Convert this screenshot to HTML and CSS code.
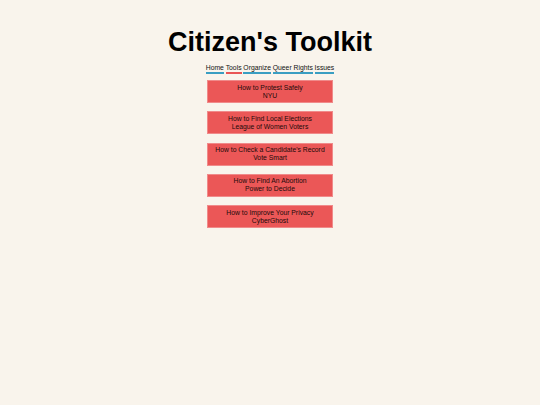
FILE: index.html
```html
<!DOCTYPE html>
<html>
<head>
<meta charset="utf-8">
<link rel="stylesheet" href="styles.css">
</head>
<body>
<div class="page">
  <h1 class="title">Citizen's Toolkit</h1>
  <nav class="nav">
    <a class="nav-link">Home</a>
    <a class="nav-link active">Tools</a>
    <a class="nav-link">Organize</a>
    <a class="nav-link">Queer Rights</a>
    <a class="nav-link">Issues</a>
  </nav>
  <div class="cards">
    <div class="card"><span>How to Protest Safely</span><span>NYU</span></div>
    <div class="card"><span>How to Find Local Elections</span><span>League of Women Voters</span></div>
    <div class="card"><span>How to Check a Candidate's Record</span><span>Vote Smart</span></div>
    <div class="card"><span>How to Find An Abortion</span><span>Power to Decide</span></div>
    <div class="card"><span>How to Improve Your Privacy</span><span>CyberGhost</span></div>
  </div>
</div>
</body>
</html>
```
FILE: styles.css
```css
html, body {
  margin: 0;
  padding: 0;
  background: #f9f4ec;
  font-family: "Liberation Sans", Arial, sans-serif;
  color: #000;
}
.page {
  display: flex;
  flex-direction: column;
  align-items: center;
  padding-top: 27px;
}
.title {
  margin: 0;
  font-size: 27px;
  font-weight: bold;
  line-height: 31px;
}
.nav {
  display: flex;
  gap: 1.8px;
  margin-top: 6px;
  font-size: 6.8px;
  line-height: 8px;
}
.nav-link {
  color: #111;
  border-bottom: 2px solid #3a9ec2;
}
.nav-link.active {
  border-bottom-color: #e95555;
}
.cards {
  display: flex;
  flex-direction: column;
  gap: 8.25px;
  margin-top: 6px;
}
.card {
  width: 126px;
  height: 23px;
  box-sizing: border-box;
  background: #eb5757;
  border: 1px solid #f08a8a;
  display: flex;
  flex-direction: column;
  align-items: center;
  justify-content: center;
  font-size: 6.8px;
  line-height: 8px;
  color: #1a0a0a;
}
```
